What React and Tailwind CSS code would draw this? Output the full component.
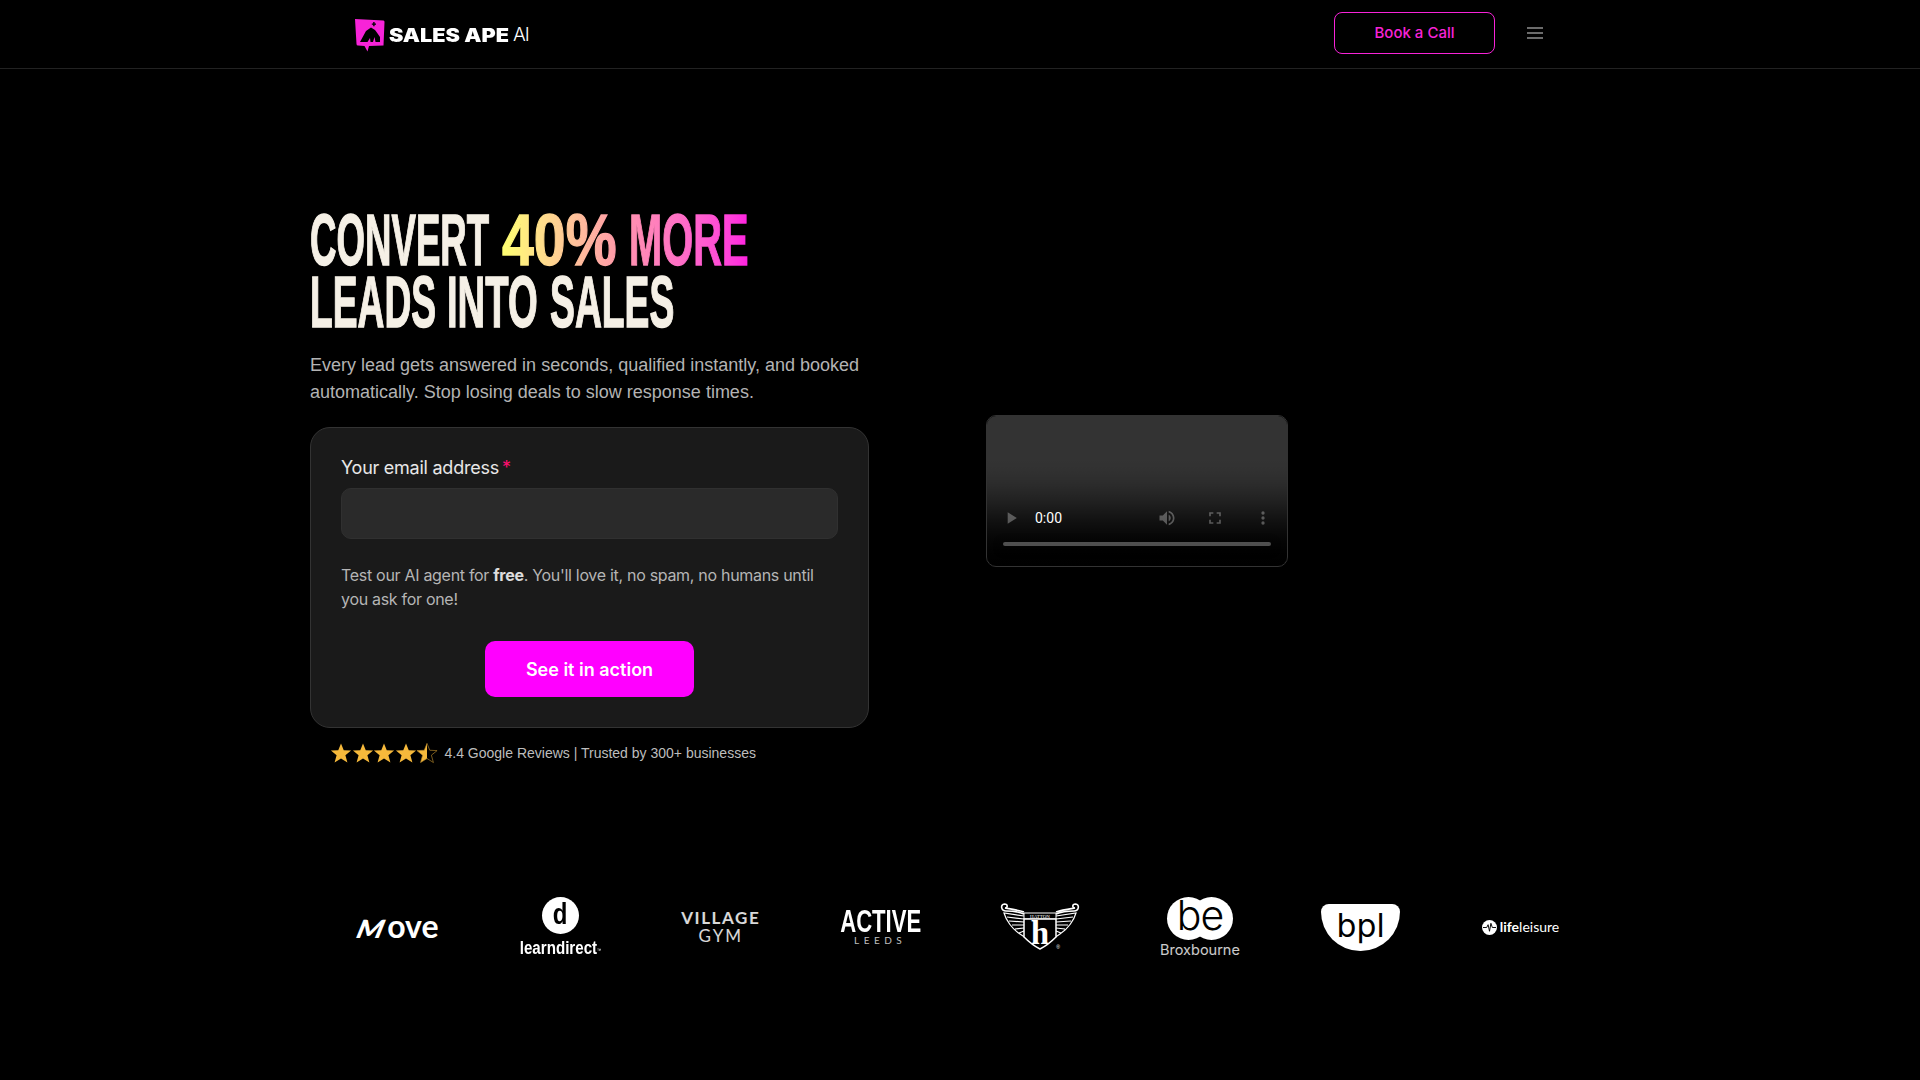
import React from "react";

const Star = ({ half }) => (
  <svg viewBox="0 0 24 24" className="w-[22px] h-[22px] -mr-[0.5px] shrink-0">
    <defs>
      <linearGradient id="halfstar" x1="0" x2="1" y1="0" y2="0">
        <stop offset="50%" stopColor="#f6b93b" />
        <stop offset="50%" stopColor="#000000" />
      </linearGradient>
    </defs>
    <polygon
      points="12,1.5 15,9 23,9.4 16.8,14.4 19,22.4 12,18 5,22.4 7.2,14.4 1,9.4 9,9"
      fill={half ? "url(#halfstar)" : "#f6b93b"}
      stroke={half ? "#b98a2c" : "none"}
      strokeWidth={half ? 0.7 : 0}
    />
  </svg>
);

const LogoMark = () => (
  <svg viewBox="0 0 30 33" className="w-[30px] h-[33px] shrink-0">
    <path d="M0 0 L28.5 1.5 Q29.5 1.5 29.5 3 L28.5 26.5 L14 27 L12.5 32.5 L9.5 27 L3 26.5 Q1.5 26.5 1.5 25 Z" fill="#f723d8" />
    <path d="M5 23 L11 12 L16 8.5 L20 11 L21.5 13 L25 18 L25 23 L20.5 23 L19.5 18 L18 23 L15.5 23 L15 19 L12.5 23 Z" fill="#000" />
    <path d="M18.2 3 h1.4 v1.4 h1.4 v1.4 h-1.4 v1.4 h-1.4 v-1.4 h-1.4 v-1.4 h1.4 z" fill="#000" />
  </svg>
);

const Hatton = () => (
  <svg viewBox="0 0 80 48" className="w-[80px] h-[48px] -ml-[2px] mr-[2px]" fill="none" stroke="#fff">
    <path d="M24 11 C17 8 10 8 6 8 C1 8 0 1.5 4.5 1 C8 1 8 5 5 5 C11 6 18 7 24 9" strokeWidth="1.6" />
    <path d="M56 11 C63 8 70 8 74 8 C79 8 80 1.5 75.5 1 C72 1 72 5 75 5 C69 6 62 7 56 9" strokeWidth="1.6" />
    <path d="M24 13 L4 10 C6 17 12 26 20 31 L26 35 M24 16 L7 14 M24 19 L9 18 M24 22 L12 22 M24 25 L15 26 M24 28 L19 30" strokeWidth="1.2" />
    <path d="M56 13 L76 10 C74 17 68 26 60 31 L54 35 M56 16 L73 14 M56 19 L71 18 M56 22 L68 22 M56 25 L65 26 M56 28 L61 30" strokeWidth="1.2" />
    <path d="M24 10 H56 V16 H24 Z" fill="#000" strokeWidth="1" />
    <path d="M24 16 H56 V34 C51 39 46 43 40 46 C34 43 29 39 24 34 Z" fill="#000" strokeWidth="1.5" />
    <text x="40" y="15" textAnchor="middle" fill="#fff" stroke="none" fontSize="5" fontFamily="Liberation Serif, serif">HATTON</text>
    <text x="40" y="41" textAnchor="middle" fill="#fff" stroke="none" fontSize="33" fontWeight="700" fontFamily="Liberation Serif, serif">h</text>
    <text x="58" y="46" textAnchor="middle" fill="#fff" stroke="none" fontSize="5" fontFamily="Liberation Sans, sans-serif">®</text>
  </svg>
);

const Be = () => (
  <div className="w-[80px] flex flex-col items-center -ml-[2px] mr-[2px]">
    <div className="relative w-[66px] h-[43px] shrink-0">
      <div className="absolute left-0 top-0 w-[43px] h-[43px] rounded-full bg-white" />
      <div className="absolute right-0 top-0 w-[43px] h-[43px] rounded-full bg-white" />
      <span className="absolute inset-0 flex items-center justify-center text-black text-[41px] leading-[43px] tracking-[-1px] pb-[5px] font-light [font-family:'Inter',sans-serif]">be</span>
    </div>
    <span className="text-white/80 text-[14.5px] leading-[17px] mt-[1px] [font-family:'Inter',sans-serif]">Broxbourne</span>
  </div>
);

const Bpl = () => (
  <div className="w-[79px] h-[47px] -ml-[1px] mr-[1px] bg-white rounded-t-[8px] rounded-b-[40px] flex items-center justify-center">
    <span className="text-black text-[32px] leading-[32px] pb-[3px] tracking-[0.5px] [font-family:'Inter',sans-serif]">bpl</span>
  </div>
);

const Life = () => (
  <div className="w-[80px] flex items-center gap-[3px]">
    <svg viewBox="0 0 16 16" className="w-[15px] h-[15px] shrink-0">
      <circle cx="8" cy="8" r="8" fill="#fff" />
      <path d="M1 8 H5 L6.5 5 L8 12 L9.5 3.5 L11 8 H15" stroke="#000" strokeWidth="1" fill="none" />
    </svg>
    <span className="text-white text-[14px] leading-[16px] whitespace-nowrap [font-family:'Lato',sans-serif]"><b>life</b>leisure</span>
  </div>
);

const Learn = () => (
  <div className="w-[80px] flex flex-col items-center">
    <div className="w-[37px] h-[37px] rounded-full bg-white flex items-center justify-center">
      <span className="inline-block scale-x-[0.8] text-black text-[30px] leading-[30px] font-bold pb-[3px] [font-family:'Liberation_Sans',sans-serif]">d</span>
    </div>
    <span className="inline-block scale-x-[0.84] text-white text-[18px] leading-[18px] mt-[5px] font-bold whitespace-nowrap [font-family:'Liberation_Sans',sans-serif]">learndirect<sup className="text-[5px] font-normal">™</sup></span>
  </div>
);

const Village = () => (
  <div className="w-[80px] flex flex-col items-center text-white/85 [font-family:'Lato',sans-serif]">
    <span className="text-[17px] leading-[18px] font-bold tracking-[1.6px] whitespace-nowrap">VILLAGE</span>
    <span className="text-[17px] leading-[18px] tracking-[2px]">GYM</span>
  </div>
);

const Active = () => (
  <div className="w-[80px] -ml-[1px] mr-[1px] flex flex-col items-center text-white">
    <span className="inline-block scale-x-[0.69] text-[32px] leading-[26px] font-bold whitespace-nowrap [font-family:'Liberation_Sans',sans-serif]">ACTIVE</span>
    <span className="text-[10px] leading-[12px] tracking-[4.5px] text-white/75 [font-family:'Lato',sans-serif]">LEEDS</span>
  </div>
);

const Move = () => (
  <div className="w-[80px] flex items-baseline justify-center text-white [font-family:'Lato',sans-serif] font-bold">
    <span className="inline-block origin-right -skew-x-[20deg] scale-x-[1.12] font-black text-[25px] leading-[30px] mr-[2px]">M</span>
    <span className="text-[32px] leading-[30px] tracking-[0px]">ove</span>
  </div>
);

export default function App() {
  return (
    <div className="bg-black h-[1080px] overflow-hidden [font-family:'Inter',sans-serif]">
      <header className="h-[69px] border-b border-[#222] flex items-center pl-[355px] pr-[377px]">
        <div className="mt-[3px]"><LogoMark /></div>
        <span className="ml-[4px] w-[124px] text-white text-[18.5px] font-black leading-[24px] pt-[1px] mt-[1px] whitespace-nowrap">
          <span className="inline-block origin-left scale-x-[1.17]">SALES APE</span>
        </span>
        <span className="text-white text-[19px] font-light tracking-[-1px] leading-[24px] pt-[1px] mt-[1px]">AI</span>
        <button className="ml-auto w-[161px] h-[42px] rounded-[8px] border-[1.5px] border-[#f723d8] text-[#f723d8] text-[15px] font-medium -mt-[2px]">Book a Call</button>
        <svg viewBox="0 0 16 12" className="w-[16px] h-[12px] ml-[32px] -mt-[2px]">
          <path d="M0 1h16M0 6h16M0 11h16" stroke="#6b6b6b" strokeWidth="2" />
        </svg>
      </header>

      <main className="pl-[310px] pt-[140px] flex items-center gap-[117px]">
        <div className="w-[559px] shrink-0">
          <h1 className="text-[#f5f0e6] text-[72px] leading-[62px] font-bold uppercase whitespace-nowrap [font-family:'Liberation_Sans',sans-serif] [-webkit-text-stroke:1.4px_currentColor]">
            <span className="flex">
              <span className="block w-[179px]"><span className="inline-block origin-left scale-x-[0.509]">Convert</span></span>
              <span className="block w-[114px] ml-[13px]"><span className="inline-block origin-left scale-x-[0.795] bg-gradient-to-r from-[#ffff70] to-[#ff9aa8] bg-clip-text text-transparent [-webkit-text-stroke:1.4px_transparent]">40%</span></span>
              <span className="block w-[118px] ml-[13px]"><span className="inline-block origin-left scale-x-[0.553] bg-gradient-to-r from-[#ff90b0] to-[#ff1fe0] bg-clip-text text-transparent [-webkit-text-stroke:1.4px_transparent]">More</span></span>
            </span>
            <span className="flex">
              <span className="block w-[125px]"><span className="inline-block origin-left scale-x-[0.517]">Leads</span></span>
              <span className="block w-[92px] ml-[12px]"><span className="inline-block origin-left scale-x-[0.531]">Into</span></span>
              <span className="block w-[123px] ml-[11px]"><span className="inline-block origin-left scale-x-[0.518]">Sales</span></span>
            </span>
          </h1>
          <p className="mt-[19px] text-[#b3b3b3] text-[18px] leading-[27px] [font-family:'Liberation_Sans',sans-serif]">
            Every lead gets answered in seconds, qualified instantly, and booked automatically. Stop losing deals to slow response times.
          </p>
          <div className="mt-[21px] h-[301px] rounded-[20px] bg-[#1a1a1a] border border-[#333] px-[30px] pt-[29px]">
            <label className="block text-white/90 text-[18px] leading-[22px] tracking-[-0.25px]">
              Your email address<span className="text-[#ff0f6f] ml-[3px]">*</span>
            </label>
            <input className="block mt-[9px] w-full h-[51px] rounded-[10px] bg-[#2a2a2a] border border-[#303030] outline-none" />
            <p className="mt-[24px] text-[#b5b5b5] text-[16px] leading-[24px] tracking-[-0.3px]">
              Test our AI agent for <b className="text-white/85 font-bold">free</b>. You'll love it, no spam, no humans until you ask for one!
            </p>
            <div className="mt-[30px] flex justify-center">
              <button className="w-[209px] h-[56px] rounded-[10px] bg-[#ff00ff] text-white text-[18px] font-semibold">See it in action</button>
            </div>
          </div>
          <div className="mt-[13px] pl-[20px] flex items-center h-[24px]">
            <Star /><Star /><Star /><Star /><Star half />
            <span className="ml-[7px] text-[#bdbdbd] text-[14px] [font-family:'Liberation_Sans',sans-serif]">4.4 Google Reviews | Trusted by 300+ businesses</span>
          </div>
        </div>
        <video controls className="block mt-[7px] w-[302px] h-[152px] shrink-0 rounded-[10px] border border-[#333]" />
      </main>

      <section className="mt-[130px] pl-[360px] flex items-center gap-[80.4px] h-[64px]">
        <Move />
        <Learn />
        <Village />
        <Active />
        <Hatton />
        <Be />
        <Bpl />
        <Life />
      </section>
    </div>
  );
}
